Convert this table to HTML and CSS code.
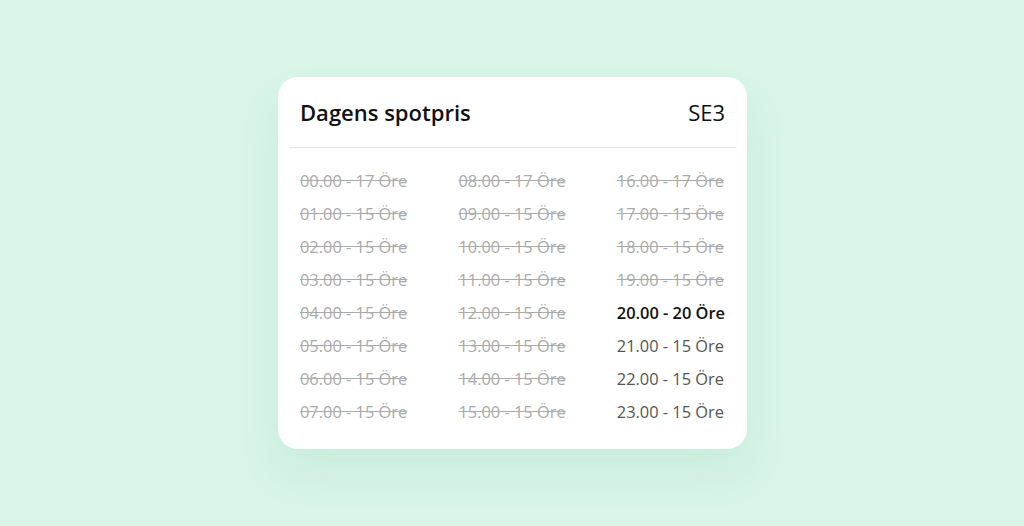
FILE: index.html
```html
<!DOCTYPE html>
<html lang="sv">
<head>
<meta charset="utf-8">
<link rel="stylesheet" href="styles.css">
</head>
<body>
<div class="stage">
  <div class="card">
    <div class="header">
      <h1 class="title">Dagens spotpris</h1>
      <span class="area">SE3</span>
    </div>
    <div class="divider"></div>
    <div class="grid">
      <div class="col">
        <span class="past">00.00 - 17 Öre</span>
        <span class="past">01.00 - 15 Öre</span>
        <span class="past">02.00 - 15 Öre</span>
        <span class="past">03.00 - 15 Öre</span>
        <span class="past">04.00 - 15 Öre</span>
        <span class="past">05.00 - 15 Öre</span>
        <span class="past">06.00 - 15 Öre</span>
        <span class="past">07.00 - 15 Öre</span>
      </div>
      <div class="col">
        <span class="past">08.00 - 17 Öre</span>
        <span class="past">09.00 - 15 Öre</span>
        <span class="past">10.00 - 15 Öre</span>
        <span class="past">11.00 - 15 Öre</span>
        <span class="past">12.00 - 15 Öre</span>
        <span class="past">13.00 - 15 Öre</span>
        <span class="past">14.00 - 15 Öre</span>
        <span class="past">15.00 - 15 Öre</span>
      </div>
      <div class="col">
        <span class="past">16.00 - 17 Öre</span>
        <span class="past">17.00 - 15 Öre</span>
        <span class="past">18.00 - 15 Öre</span>
        <span class="past">19.00 - 15 Öre</span>
        <span class="now">20.00 - 20 Öre</span>
        <span class="future">21.00 - 15 Öre</span>
        <span class="future">22.00 - 15 Öre</span>
        <span class="future">23.00 - 15 Öre</span>
      </div>
    </div>
  </div>
</div>
</body>
</html>
```

FILE: styles.css
```css
html, body {
  margin: 0;
  padding: 0;
}
body {
  background: #d8f5e8;
  font-family: "Open Sans", "Liberation Sans", sans-serif;
  width: 1024px;
  height: 526px;
  overflow: hidden;
}
.stage {
  display: flex;
  justify-content: center;
  padding-top: 77px;
  padding-left: 1px;
}
.card {
  width: 469px;
  height: 372px;
  box-sizing: border-box;
  background: #ffffff;
  border-radius: 20px;
  box-shadow: 0 24px 40px rgba(90, 170, 130, 0.1);
  padding: 0 11px;
}
.header {
  display: flex;
  justify-content: space-between;
  align-items: center;
  padding: 0 11px;
  height: 70px;
}
.title {
  margin: 0;
  font-size: 22px;
  font-weight: 560;
  color: #111;
}
.area {
  font-size: 22px;
  font-weight: 400;
  color: #111;
}
.divider {
  height: 1px;
  background: #e4e4e4;
}
.grid {
  display: flex;
  justify-content: space-between;
  padding: 16px 11px 0;
}
.col {
  display: flex;
  flex-direction: column;
}
.col span {
  font-size: 16.4px;
  line-height: 33px;
  white-space: nowrap;
}
.past {
  color: #aaaaaa;
  text-decoration: line-through;
}
.now {
  color: #111;
  font-weight: 600;
}
.future {
  color: #555;
}
```
